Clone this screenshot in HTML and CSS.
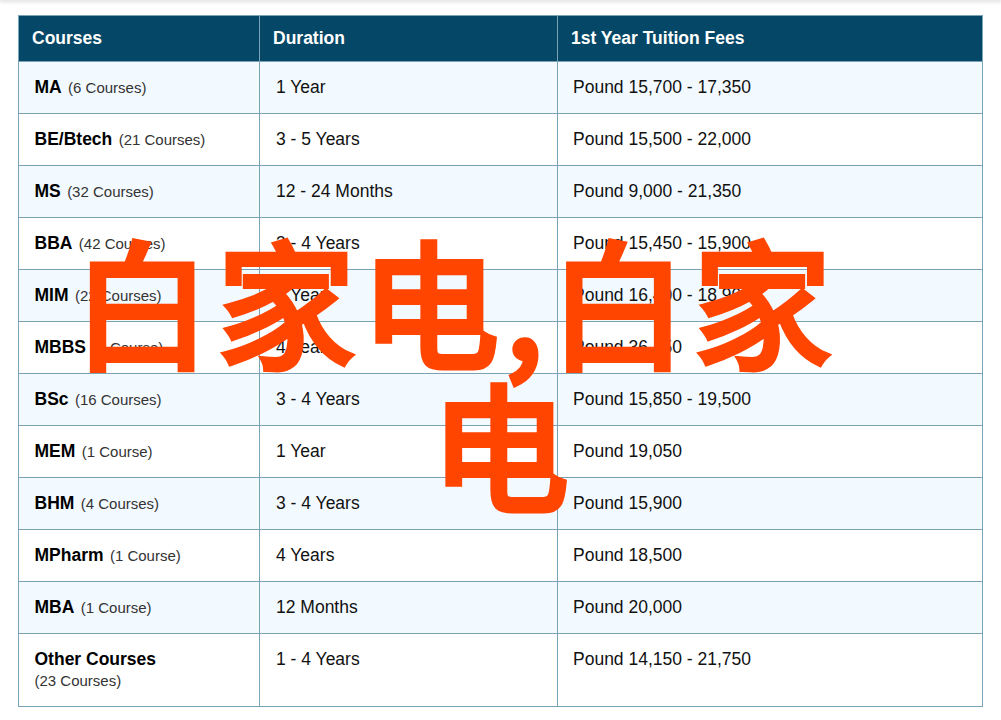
FILE: index.html
```html
<!DOCTYPE html>
<html lang="en">
<head>
<meta charset="utf-8">
<title>Courses</title>
<link rel="stylesheet" href="styles.css">
</head>
<body>
<div class="topbar"></div>
<main class="page">
<table class="courses">
<colgroup><col class="c1"><col class="c2"><col class="c3"></colgroup>
<thead><tr><th>Courses</th><th>Duration</th><th>1st Year Tuition Fees</th></tr></thead>
<tbody>
<tr><td><b>MA</b> <small>(6 Courses)</small></td><td>1 Year</td><td>Pound 15,700 - 17,350</td></tr>
<tr><td><b>BE/Btech</b> <small>(21 Courses)</small></td><td>3 - 5 Years</td><td>Pound 15,500 - 22,000</td></tr>
<tr><td><b>MS</b> <small>(32 Courses)</small></td><td>12 - 24 Months</td><td>Pound 9,000 - 21,350</td></tr>
<tr><td><b>BBA</b> <small>(42 Courses)</small></td><td>3 - 4 Years</td><td>Pound 15,450 - 15,900</td></tr>
<tr><td><b>MIM</b> <small>(22 Courses)</small></td><td>1 Year</td><td>Pound 16,400 - 18,900</td></tr>
<tr><td><b>MBBS</b> <small>(1 Course)</small></td><td>4 Years</td><td>Pound 36,150</td></tr>
<tr><td><b>BSc</b> <small>(16 Courses)</small></td><td>3 - 4 Years</td><td>Pound 15,850 - 19,500</td></tr>
<tr><td><b>MEM</b> <small>(1 Course)</small></td><td>1 Year</td><td>Pound 19,050</td></tr>
<tr><td><b>BHM</b> <small>(4 Courses)</small></td><td>3 - 4 Years</td><td>Pound 15,900</td></tr>
<tr><td><b>MPharm</b> <small>(1 Course)</small></td><td>4 Years</td><td>Pound 18,500</td></tr>
<tr><td><b>MBA</b> <small>(1 Course)</small></td><td>12 Months</td><td>Pound 20,000</td></tr>
<tr><td class="two-line"><b>Other Courses</b><br><small>(23 Courses)</small></td><td>1 - 4 Years</td><td>Pound 14,150 - 21,750</td></tr>
</tbody>
</table>
</main>
<div class="overlay"><span class="line1">白家电,白家</span><span class="line2">电</span></div>
</body>
</html>
```

FILE: styles.css
```css
html, body {
  margin: 0;
  padding: 0;
  background: #fff;
}
body {
  font-family: "Liberation Sans", Arial, sans-serif;
  height: 720px;
  overflow: hidden;
  position: relative;
}
.topbar {
  height: 0;
  box-shadow: 0 0 4px 1px rgba(0, 0, 0, 0.25);
}
.page {
  padding: 15px 18px 0;
}
.courses {
  width: 964px;
  border-collapse: collapse;
  table-layout: fixed;
  color: #111;
  font-size: 17.5px;
}
.c1 { width: 241px; }
.c2 { width: 298px; }
.c3 { width: 425px; }
.courses th, .courses td {
  border: 1px solid #7ba3b8;
  text-align: left;
  vertical-align: top;
  line-height: 22px;
}
.courses th {
  background: #054766;
  color: #fff;
  font-weight: 700;
  height: 46px;
  box-sizing: border-box;
  padding: 11px 13px;
}
.courses td {
  height: 52px;
  box-sizing: border-box;
  padding: 14px 16px;
}
.courses td:first-child { padding-left: 15.5px; }
.courses td:last-child { padding-left: 15px; }
.courses tbody tr:nth-child(odd) td { background: #f3faff; }
.courses b { color: #000; }
.courses small { font-size: 15px; line-height: 1; color: #333; margin-left: 1.5px; }
.courses br + small { margin-left: 0; }
.courses tbody tr:last-child td { height: 73px; padding-bottom: 13px; }
.courses tbody tr:last-child td.two-line { line-height: 21px; padding-top: 14.5px; }
.overlay {
  position: absolute;
  left: 73px;
  top: 227px;
  color: #ff4500;
  font-family: "Noto Sans CJK SC", sans-serif;
  font-weight: 400;
  -webkit-text-stroke: 6px #ff4500;
  font-size: 138px;
  letter-spacing: 6px;
  line-height: 143px;
  white-space: nowrap;
}
.line1, .line2 { display: block; }
.line2 { padding-left: 358px; }
```
